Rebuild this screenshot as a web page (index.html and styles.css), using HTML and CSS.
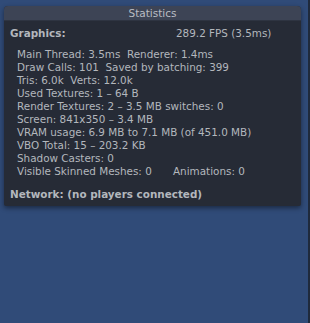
FILE: index.html
```html
<!DOCTYPE html>
<html lang="en">
<head>
<meta charset="UTF-8">
<title>Statistics</title>
<link rel="stylesheet" href="styles.css">
</head>
<body>
<div class="screen">
  <div class="game-view">
    <div class="stats">
      <div class="stats-title">Statistics</div>
      <div class="stats-body">
        <div class="row heading">
          <span class="label">Graphics:</span>
          <span class="fps">289.2 FPS (3.5ms)</span>
        </div>
        <div class="details">
          <div>Main Thread: 3.5ms&nbsp; Renderer: 1.4ms</div>
          <div>Draw Calls: 101&nbsp; Saved by batching: 399</div>
          <div>Tris: 6.0k&nbsp; Verts: 12.0k</div>
          <div>Used Textures: 1 &ndash; 64 B</div>
          <div>Render Textures: 2 &ndash; 3.5 MB&nbsp;switches: 0</div>
          <div>Screen: 841x350 &ndash; 3.4 MB</div>
          <div>VRAM usage: 6.9 MB to 7.1 MB (of 451.0 MB)</div>
          <div>VBO Total: 15 &ndash; 203.2 KB</div>
          <div>Shadow Casters: 0</div>
          <div class="split"><span class="skinned">Visible Skinned Meshes: 0</span><span>Animations: 0</span></div>
        </div>
        <div class="row heading">Network: (no players connected)</div>
      </div>
    </div>
  </div>
  <div class="edge"></div>
</div>
</body>
</html>
```

FILE: styles.css
```css
/* Game view background */
body {
  margin: 0;
  padding: 0;
  background-color: #304b78;
  font-family: "DejaVu Sans", Verdana, sans-serif;
  font-size: 10.4px;
  color: #b3b7bd;
}
.screen {
  display: flex;
  height: 323px;
}
.game-view {
  flex: 1;
  padding: 6px 6px 0 4px;
}
.edge {
  width: 2px;
  background-color: #1f2a3c;
}

/* Statistics panel */
.stats {
  width: 297px;
  background-color: #262b36;
  border-radius: 4px 4px 2px 2px;
  box-shadow: 0 2px 5px rgba(0, 0, 0, 0.45);
  overflow: hidden;
}
.stats-title {
  height: 14px;
  line-height: 15px;
  text-align: center;
  background-color: #3d4455;
  color: #b9bdc4;
  font-size: 10.5px;
  border-bottom: 1px solid #2e3441;
}
.stats-body {
  padding: 6px 6px 5px 6px;
}
.row {
  display: flex;
  line-height: 13px;
}
.heading {
  font-weight: bold;
}
.heading .label {
  width: 166px;
}
.fps {
  font-weight: normal;
}
.details {
  padding: 8px 0 10px 7px;
  line-height: 13px;
}
.split {
  display: flex;
}
.skinned {
  width: 156px;
}
```
